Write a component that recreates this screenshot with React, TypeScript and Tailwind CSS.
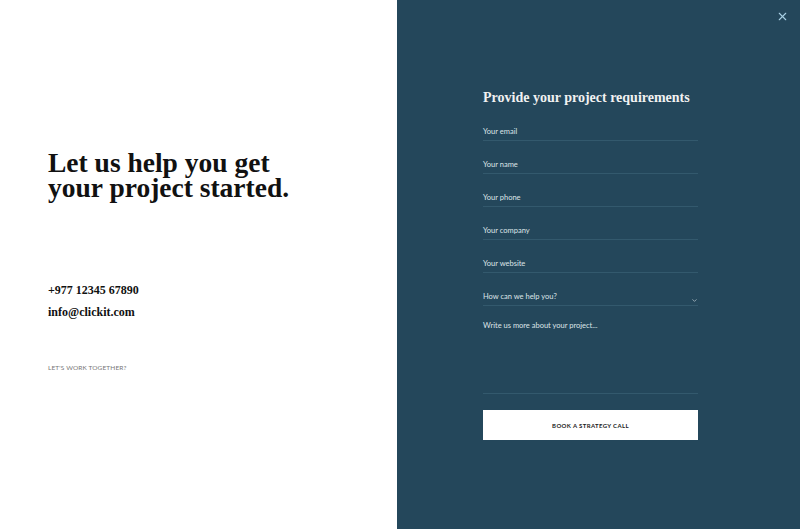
import { X, ChevronDown } from "lucide-react";

const FIELDS = ["Your email", "Your name", "Your phone", "Your company", "Your website"];

const serif = "font-['Liberation_Serif',serif]";
const sans = "font-['Lato',sans-serif]";

export default function App() {
  return (
    <div className="flex h-[529px] w-full overflow-hidden">
      {/* Left intro */}
      <div className="w-[397px] shrink-0 bg-white pl-[48px] pt-[150px]">
        <h1 className={`${serif} text-[27.5px] font-bold leading-[25px] text-[#111]`}>
          Let us help you get
          <br />
          your project started.
        </h1>
        <div className={`${serif} mt-[83px] flex flex-col gap-[8px] text-[12px] font-bold leading-[14px] text-[#111]`}>
          <span>+977 12345 67890</span>
          <span>info@clickit.com</span>
        </div>
        <p className={`${sans} mt-[44px] text-[6.5px] uppercase tracking-[0.02em] text-[#777]`}>Let's work together?</p>
      </div>

      {/* Right form */}
      <div className="relative flex-1 bg-[#24475b]">
        <button className="absolute right-[11px] top-[10px] text-[#a9d0e4]">
          <X size={13} strokeWidth={2} />
        </button>

        <div className="ml-[86px] w-[215px] pt-[88px]">
          <h2 className={`${serif} text-[14px] font-bold leading-[20px] text-[#f1f1f1]`}>
            Provide your project requirements
          </h2>
          <div className="flex flex-col">
            {FIELDS.map((f) => (
              <div key={f} className="flex h-[33px] items-end border-b border-[#33596d] pb-[3px]">
                <span className={`${sans} text-[7.5px] leading-[10px] text-[#dde4e8]`}>{f}</span>
              </div>
            ))}
            <div className="flex h-[33px] items-end justify-between border-b border-[#33596d] pb-[3px]">
              <span className={`${sans} text-[7.5px] leading-[10px] text-[#dde4e8]`}>How can we help you?</span>
              <ChevronDown size={7} strokeWidth={2} className="mb-[-2px] text-[#dde4e8]" />
            </div>
            <div className="h-[88px] border-b border-[#33596d] pt-[15px]">
              <p className={`${sans} text-[7.5px] leading-[10px] text-[#dde4e8]`}>Write us more about your project...</p>
            </div>
          </div>
          <button
            className={`${sans} mt-[16px] flex h-[30px] w-full items-center justify-center bg-white text-[6px] font-bold uppercase tracking-[0.06em] text-[#1a1a1a]`}
          >
            Book a strategy call
          </button>
        </div>
      </div>
    </div>
  );
}
